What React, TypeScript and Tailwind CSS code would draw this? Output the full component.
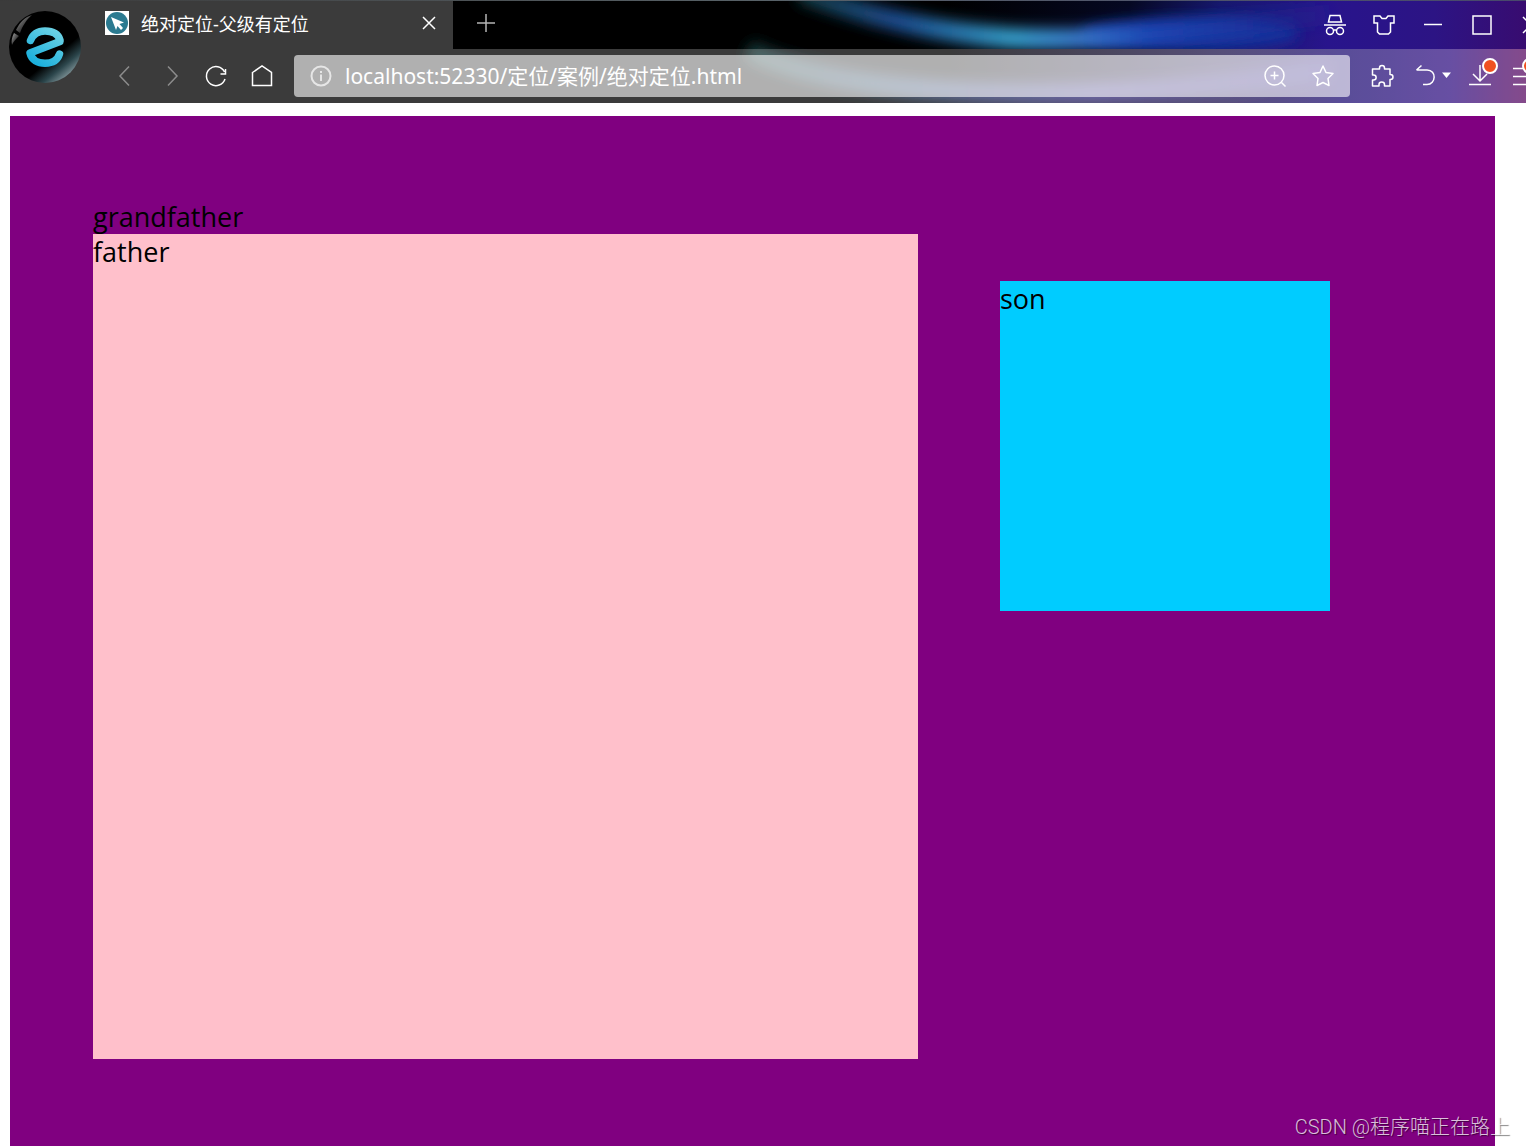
import type { ReactNode } from 'react';

interface IconButtonProps {
  label: string;
  className: string;
  children: ReactNode;
}

const IconButton = ({ label, className, children }: IconButtonProps) => (
  <button type="button" aria-label={label} className={`flex shrink-0 items-center justify-center ${className}`}>
    {children}
  </button>
);

const iconProps = {
  width: 24,
  height: 24,
  viewBox: '0 0 24 24',
  fill: 'none',
  stroke: 'currentColor',
  strokeWidth: 1.5,
  className: 'shrink-0 overflow-visible',
};

// Skin image behind the tabs and the toolbar
const Wallpaper = () => (
  <svg
    className="absolute inset-0 h-full w-full"
    viewBox="0 0 1526 103"
    preserveAspectRatio="xMaxYMin slice"
    aria-hidden="true"
  >
    <defs>
      <linearGradient id="base" x1="0" x2="1">
        <stop offset="0.62" stopColor="#000000" />
        <stop offset="0.74" stopColor="#050822" />
        <stop offset="0.8" stopColor="#16186c" />
        <stop offset="0.87" stopColor="#28148c" />
        <stop offset="0.94" stopColor="#2c1484" />
        <stop offset="1" stopColor="#380c70" />
      </linearGradient>
      <linearGradient id="lower" x1="0" x2="1">
        <stop offset="0.62" stopColor="#000000" />
        <stop offset="0.8" stopColor="#241a50" />
        <stop offset="0.88" stopColor="#28187a" />
        <stop offset="0.95" stopColor="#3a1a88" />
        <stop offset="1" stopColor="#601468" />
      </linearGradient>
      <linearGradient id="arc" gradientUnits="userSpaceOnUse" x1="790" x2="1320" y1="0" y2="0">
        <stop offset="0" stopColor="#143c3c" />
        <stop offset="0.2" stopColor="#1c4c90" />
        <stop offset="0.42" stopColor="#36a0cc" />
        <stop offset="0.55" stopColor="#3878cc" />
        <stop offset="0.68" stopColor="#1c48b4" />
        <stop offset="1" stopColor="#1c2c98" stopOpacity="0.2" />
      </linearGradient>
      <linearGradient id="arcLow" gradientUnits="userSpaceOnUse" x1="740" x2="1340" y1="0" y2="0">
        <stop offset="0" stopColor="#183c38" />
        <stop offset="0.3" stopColor="#28406c" />
        <stop offset="0.6" stopColor="#443a90" />
        <stop offset="1" stopColor="#4030a0" stopOpacity="0.5" />
      </linearGradient>
      <filter id="soft" x="-20%" y="-100%" width="140%" height="300%">
        <feGaussianBlur stdDeviation="7" />
      </filter>
    </defs>
    <rect width="1526" height="50" fill="url(#base)" />
    <ellipse cx="1190" cy="34" rx="110" ry="16" fill="#16309c" filter="url(#soft)" />
    <path d="M930 8H1110" stroke="#02020a" strokeWidth="16" filter="url(#soft)" />
    <path
      d="M800 -8C860 14 930 32 1010 38C1100 42 1180 34 1330 14"
      fill="none"
      stroke="url(#arc)"
      strokeWidth="20"
      filter="url(#soft)"
    />
    <rect y="49" width="1526" height="54" fill="url(#lower)" />
    <path
      d="M748 50C800 78 900 90 990 93C1100 96 1200 90 1330 70"
      fill="none"
      stroke="url(#arcLow)"
      strokeWidth="20"
      filter="url(#soft)"
    />
  </svg>
);

const BrowserLogo = () => (
  <svg width="72" height="72" viewBox="0 0 72 72" aria-hidden="true">
    <defs>
      <linearGradient id="orb" x1="0.2" y1="0.1" x2="0.85" y2="0.9">
        <stop offset="0" stopColor="#000000" />
        <stop offset="0.66" stopColor="#000000" />
        <stop offset="0.84" stopColor="#2c464c" />
        <stop offset="1" stopColor="#84989c" />
      </linearGradient>
      <linearGradient id="shine" x1="0" y1="0" x2="1" y2="1">
        <stop offset="0" stopColor="#a8a8a8" />
        <stop offset="0.8" stopColor="#101010" />
      </linearGradient>
      <linearGradient id="mark" x1="0.8" y1="0" x2="0.2" y2="1">
        <stop offset="0" stopColor="#68d0e4" />
        <stop offset="1" stopColor="#1cb0dc" />
      </linearGradient>
    </defs>
    <circle cx="36" cy="36" r="36" fill="url(#orb)" />
    <path d="M7 19C11 11 16 6 23 4C17 9 13 16 11 22Z" fill="url(#shine)" />
    <path d="M5 22L10 25C7 28 4 31 3 34C2 30 3 26 5 22Z" fill="url(#shine)" />
    <path
      d="M21.500 29.500C24 23 29 20 36 20C43 20 49 22.500 51 29L51 30.500L21 42C22.500 49 29 52.200 36 52.200C43 52.200 48.500 49.500 50.500 43"
      fill="none"
      stroke="url(#mark)"
      strokeWidth="7.500"
      strokeLinecap="round"
      strokeLinejoin="round"
    />
  </svg>
);

const TabBar = () => (
  <div className="flex h-12">
    <div className="flex w-[360px] shrink-0 items-center bg-white/[0.23] px-3 pb-1">
      <svg width="24" height="24" viewBox="0 0 24 24" className="shrink-0" aria-hidden="true">
        <rect width="24" height="24" fill="#ffffff" />
        <circle cx="12" cy="12" r="11" fill="#2b7a90" />
        <path d="M6 6L19 11.500L14.500 13L18 17L16 19L12.500 15L11 19Z" fill="#ffffff" />
      </svg>
      <h1 className="ml-3 flex-1 truncate pt-0.5 text-lg leading-6 text-white">绝对定位-父级有定位</h1>
      <IconButton label="关闭标签页" className="h-6 w-6 text-white">
        <svg {...iconProps}>
          <path d="M6 6L18 18M18 6L6 18" />
        </svg>
      </IconButton>
    </div>
    <IconButton label="新建标签页" className="ml-[21px] h-11 w-6 text-[#b4b4b4]">
      <svg {...iconProps}>
        <path d="M12 3V21M3 12H21" />
      </svg>
    </IconButton>
    <div className="-mr-[29px] ml-auto flex text-white">
      <IconButton label="无痕模式" className="w-[49px]">
        <svg {...iconProps}>
          <path d="M5.500 9L7 2.500H17L18.500 9ZM1 12H23M11 17H13" />
          <circle cx="7" cy="18" r="3.500" />
          <circle cx="17" cy="18" r="3.500" />
        </svg>
      </IconButton>
      <IconButton label="皮肤" className="w-[49px]">
        <svg {...iconProps}>
          <path d="M2 3H8L10 5.500H14L16 3H22V10H18.500V19L16.500 21H7.500L5.500 19V10H2Z" />
        </svg>
      </IconButton>
      <IconButton label="最小化" className="w-[49px]">
        <svg {...iconProps}>
          <path d="M3 11.500H21" />
        </svg>
      </IconButton>
      <IconButton label="最大化" className="w-[49px]">
        <svg {...iconProps}>
          <rect x="3" y="3" width="18" height="18" />
        </svg>
      </IconButton>
      <IconButton label="关闭" className="w-[49px]">
        <svg {...iconProps}>
          <path d="M4 4L20 20M20 4L4 20" />
        </svg>
      </IconButton>
    </div>
  </div>
);

const AddressBar = () => (
  <form className="ml-5 flex h-[42px] min-w-0 flex-1 items-center rounded-sm bg-white/60 pl-[15px] text-white">
    <svg {...iconProps} strokeWidth={2} stroke="#e6e6e6" aria-hidden="true">
      <circle cx="12" cy="12" r="9.500" />
      <path d="M12 10.500V17M12 7V9" />
    </svg>
    <input
      type="text"
      aria-label="地址栏"
      defaultValue="localhost:52330/定位/案例/绝对定位.html"
      className="ml-3 min-w-0 flex-1 bg-transparent text-[21px] leading-7 outline-none"
    />
    <IconButton label="缩放" className="h-10 w-12">
      <svg {...iconProps}>
        <circle cx="11.500" cy="11.500" r="9.500" />
        <path d="M11.500 7.500V15.500M7.500 11.500H15.500M18.500 18.500L22.500 22.500" />
      </svg>
    </IconButton>
    <IconButton label="收藏" className="mr-[3px] h-10 w-12">
      <svg {...iconProps} strokeLinejoin="round">
        <path d="M12 2L15 8.500L22 9.500L17 14.500L18 21.500L12 18.500L6 21.500L7 14.500L2 9.500L9 8.500Z" />
      </svg>
    </IconButton>
  </form>
);

const Toolbar = () => (
  <div className="flex h-[54px] items-center bg-white/[0.23] text-white">
    <IconButton label="后退" className="ml-5 w-6 text-[#8c8c8c]">
      <svg {...iconProps}>
        <path d="M16 2.500L7 12L16 21.500" />
      </svg>
    </IconButton>
    <IconButton label="前进" className="ml-6 w-6 text-[#8c8c8c]">
      <svg {...iconProps}>
        <path d="M7 2.500L16 12L7 21.500" />
      </svg>
    </IconButton>
    <IconButton label="刷新" className="ml-[19px] w-6">
      <svg {...iconProps}>
        <path d="M21 15A9.500 9.500 0 1 1 20.500 8M21.500 5V10H16.500" />
      </svg>
    </IconButton>
    <IconButton label="主页" className="ml-[22px] w-6">
      <svg {...iconProps}>
        <path d="M2.500 8.500L12 2L21.500 8.500V21.500H2.500Z" />
      </svg>
    </IconButton>
    <AddressBar />
    <div className="-mr-[10px] flex">
      <IconButton label="扩展" className="ml-5 w-6">
        <svg {...iconProps} strokeLinejoin="round">
          <path d="M2.500 5H9.500V4C9.500 0.700 14.500 0.700 14.500 4V5H20V10.500H20.500C23.800 10.500 23.800 15.500 20.500 15.500H20V22H14.500V20.500C14.500 17.200 9 17.200 9 20.500V22H2.500V16H3.500C7 16 7 11 3.500 11H2.500Z" />
        </svg>
      </IconButton>
      <IconButton label="恢复" className="ml-5 w-9">
        <svg {...iconProps}>
          <path d="M7.500 1.500L2.500 6M2.500 6H13C23 6 22 20.500 13 20.500H9" />
        </svg>
        <svg width="12" height="8" viewBox="0 0 12 8" className="shrink-0 overflow-visible">
          <path d="M4 0.500H13L8.500 6Z" fill="currentColor" />
        </svg>
      </IconButton>
      <IconButton label="下载" className="relative ml-[18px] w-6">
        <svg {...iconProps}>
          <path d="M12 1V17M5 10L12 17L19 10M1 20.500H23" />
        </svg>
        <span className="absolute -right-1.5 -top-1.5 h-4 w-4 rounded-full border-2 border-white bg-[#f05020]" />
      </IconButton>
      <IconButton label="菜单" className="relative ml-5 w-6">
        <svg {...iconProps}>
          <path d="M1 4.500H23M1 12.500H23M1 20.500H23" />
        </svg>
        <span className="absolute -right-0.5 -top-1.5 h-4 w-4 rounded-full border-2 border-white bg-[#f05020]" />
      </IconButton>
    </div>
  </div>
);

const BrowserHeader = () => (
  <header className="relative overflow-hidden bg-black">
    <Wallpaper />
    <div className="relative h-px bg-linear-to-r from-[#3a3a3a] via-[#586268] to-[#48486c]" />
    <div className="relative flex">
      <div className="flex w-[93px] shrink-0 bg-white/[0.23] pl-[9px] pt-[10px]">
        <BrowserLogo />
      </div>
      <div className="min-w-0 flex-1">
        <TabBar />
        <Toolbar />
      </div>
    </div>
  </header>
);

const App = () => (
  <div className="relative flex min-h-screen flex-col bg-white font-['Noto_Sans','Noto_Sans_CJK_SC',sans-serif]">
    <BrowserHeader />

    {/* Positioning demo: three nested generations */}
    <main className="flex flex-1 pl-[10px] pr-[31px] pt-[13px] font-['Open_Sans','Noto_Sans',sans-serif] text-[27px] leading-[35px] text-black">
      <div className="flex flex-1 items-start justify-between bg-[purple] px-[83px] pb-[87px] pt-[83px]">
        <div>
          <p>grandfather</p>
          <div className="h-[825px] w-[825px] bg-[pink]">father</div>
        </div>
        <div className="mr-[82px] mt-[82px] h-[330px] w-[330px] bg-[#00ccff]">son</div>
      </div>
    </main>

    <p className="absolute bottom-[3px] right-4 font-['Roboto','Noto_Sans_CJK_SC',sans-serif] text-xl font-light leading-8 text-white/75 [text-shadow:1px_1px_1px_rgba(0,0,0,0.5)]">
      CSDN @程序喵正在路上
    </p>
  </div>
);

export default App;
